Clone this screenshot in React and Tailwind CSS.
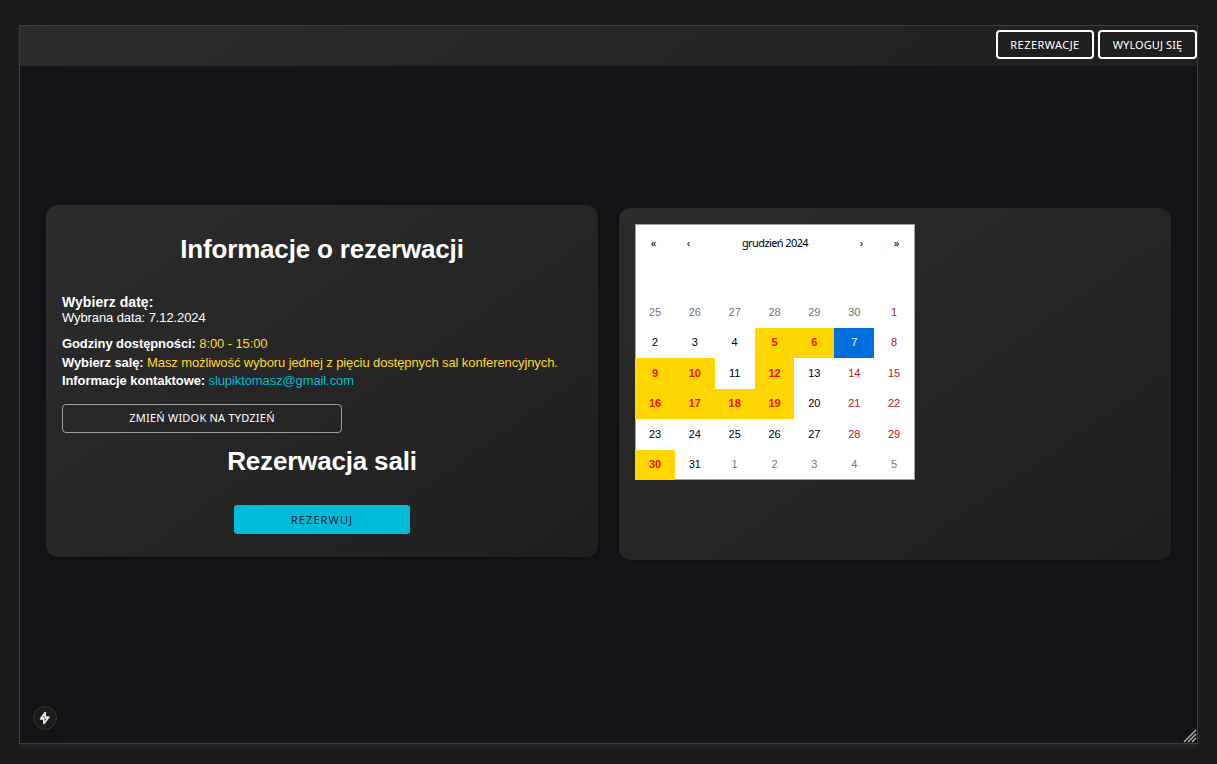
const weeks = [
  [25, 26, 27, 28, 29, 30, 1],
  [2, 3, 4, 5, 6, 7, 8],
  [9, 10, 11, 12, 13, 14, 15],
  [16, 17, 18, 19, 20, 21, 22],
  [23, 24, 25, 26, 27, 28, 29],
  [30, 31, 1, 2, 3, 4, 5],
];
const reserved = [5, 6, 9, 10, 12, 16, 17, 18, 19, 30];

function dayStyle(day, row, col) {
  const outside = (row === 0 && day > 20) || (row === 5 && day < 10);
  if (outside) return 'text-[#757575]';
  if (reserved.includes(day)) return 'bg-[#ffd700] font-bold text-[#f01010]';
  if (day === 7) return 'bg-[#006edc] text-white';
  if (col > 4) return 'text-[#c01020]';
  return 'text-black';
}

function HeaderButton({ className, children }) {
  return (
    <button
      className={
        "h-[29px] rounded-[4px] border-2 border-white bg-[#1f1f1f] pt-px font-['Noto_Sans',sans-serif] text-[11px] whitespace-nowrap text-white " +
        className
      }
    >
      {children}
    </button>
  );
}

function InfoCard() {
  return (
    <section className="flex h-[352px] w-[552px] flex-col rounded-xl bg-linear-[145deg,#2c2c2c,#1f1f1f] px-4 text-[13px] leading-[18px] tracking-[-0.1px] text-white shadow-[0_3px_6px_rgba(0,0,0,0.2)]">
      <h1 className="mt-[28px] text-center text-[26px] leading-8 font-bold tracking-[-0.18px]">Informacje o rezerwacji</h1>
      <h2 className="mt-[29px] text-[14px] leading-4 font-bold tracking-[0.05px]">Wybierz datę:</h2>
      <p className="leading-[15px]">Wybrana data: 7.12.2024</p>
      <p className="mt-[10px]">
        <b>Godziny dostępności:</b> <span className="text-[#ffd92a]">8:00 - 15:00</span>
      </p>
      <p className="mt-px">
        <b>Wybierz salę:</b>{' '}
        <span className="text-[#ffd92a]">Masz możliwość wyboru jednej z pięciu dostępnych sal konferencyjnych.</span>
      </p>
      <p>
        <b>Informacje kontaktowe:</b> <span className="text-[#00bcd4]">slupiktomasz@gmail.com</span>
      </p>
      <button className="mt-[14px] h-[29px] w-[280px] shrink-0 rounded-[4px] border border-[#a0a0a0] pb-px font-['Noto_Sans',sans-serif] text-[11px] tracking-[0.22px]">
        ZMIEŃ WIDOK NA TYDZIEŃ
      </button>
      <h1 className="mt-3 text-center text-[26px] leading-8 font-bold tracking-[-0.18px]">Rezerwacja sali</h1>
      <button className="mt-7 h-[29px] w-[176px] shrink-0 self-center rounded-[3px] bg-[#00bcd8] font-['Noto_Sans',sans-serif] text-[11px] tracking-[1.1px] text-[#12263a]">
        REZERWUJ
      </button>
    </section>
  );
}

function Calendar() {
  return (
    <div className="flex h-[256px] w-[280px] flex-col border border-[#a0a0a0] bg-white text-[11px] text-black">
      <div className="flex h-9 items-center font-['Noto_Sans',sans-serif]">
        <span className="w-[35px] text-center">«</span>
        <span className="w-[35px] text-center">‹</span>
        <span className="flex-1 text-center tracking-[-0.6px]">grudzień 2024</span>
        <span className="w-[35px] text-center">›</span>
        <span className="w-[35px] text-center">»</span>
      </div>
      <div className="-mr-px -mb-px -ml-px mt-auto grid h-[182.6px] grid-cols-7 grid-rows-6 pr-px">
        {weeks.map((week, row) =>
          week.map((day, col) => (
            <span key={row + '-' + col} className={'flex items-center justify-center pb-px tracking-[-0.1px] ' + dayStyle(day, row, col)}>
              {day}
            </span>
          )),
        )}
      </div>
    </div>
  );
}

export default function App() {
  return (
    <div className="h-[764px] w-[1217px] bg-[#1a1a1b] pt-[25px] pl-[19px] font-['Liberation_Sans',sans-serif]">
      <div className="relative flex h-[719px] w-[1179px] flex-col border border-[#3c3c40] bg-[#141418] shadow-[0_3px_4px_rgba(60,60,66,0.4)]">
        <header className="flex h-10 shrink-0 items-start justify-end gap-1 bg-linear-[145deg,#2c2c2c,#1f1f1f] pt-1">
          <HeaderButton className="w-[98px] tracking-[0.45px]">REZERWACJE</HeaderButton>
          <HeaderButton className="w-[99px] tracking-[0.1px]">WYLOGUJ SIĘ</HeaderButton>
        </header>
        <main className="flex items-start gap-[21px] pt-[139px] pl-[26px]">
          <InfoCard />
          <section className="mt-[3px] h-[352px] w-[552px] rounded-xl bg-linear-[145deg,#2c2c2c,#1f1f1f] p-4 shadow-[0_3px_6px_rgba(0,0,0,0.2)]">
            <Calendar />
          </section>
        </main>
        <div className="absolute bottom-[13px] left-[13px] flex size-6 items-center justify-center rounded-full border border-[#343434] bg-[#1c1c1c] shadow-[0_0_14px_rgba(0,0,0,0.25)]">
          <svg width="12" height="14" viewBox="0 0 12 14" fill="none" stroke="#e4e4e4" strokeWidth="1.7" strokeLinejoin="round">
            <path d="M6.2 1.6 L1.6 7.8 H4.9 V12.4 L9.8 6.2 H6.2 Z" />
            <path d="M3.2 5.6 L4.9 7.8 M6.2 6.2 L8.2 8.6" />
          </svg>
        </div>
        <svg className="absolute right-0 bottom-0" width="14" height="14" viewBox="0 0 14 14" stroke="#b4b4b0" strokeWidth="1.4">
          <path d="M1 13 L13 1 M5 13 L13 5 M9 13 L13 9" />
        </svg>
      </div>
    </div>
  );
}
